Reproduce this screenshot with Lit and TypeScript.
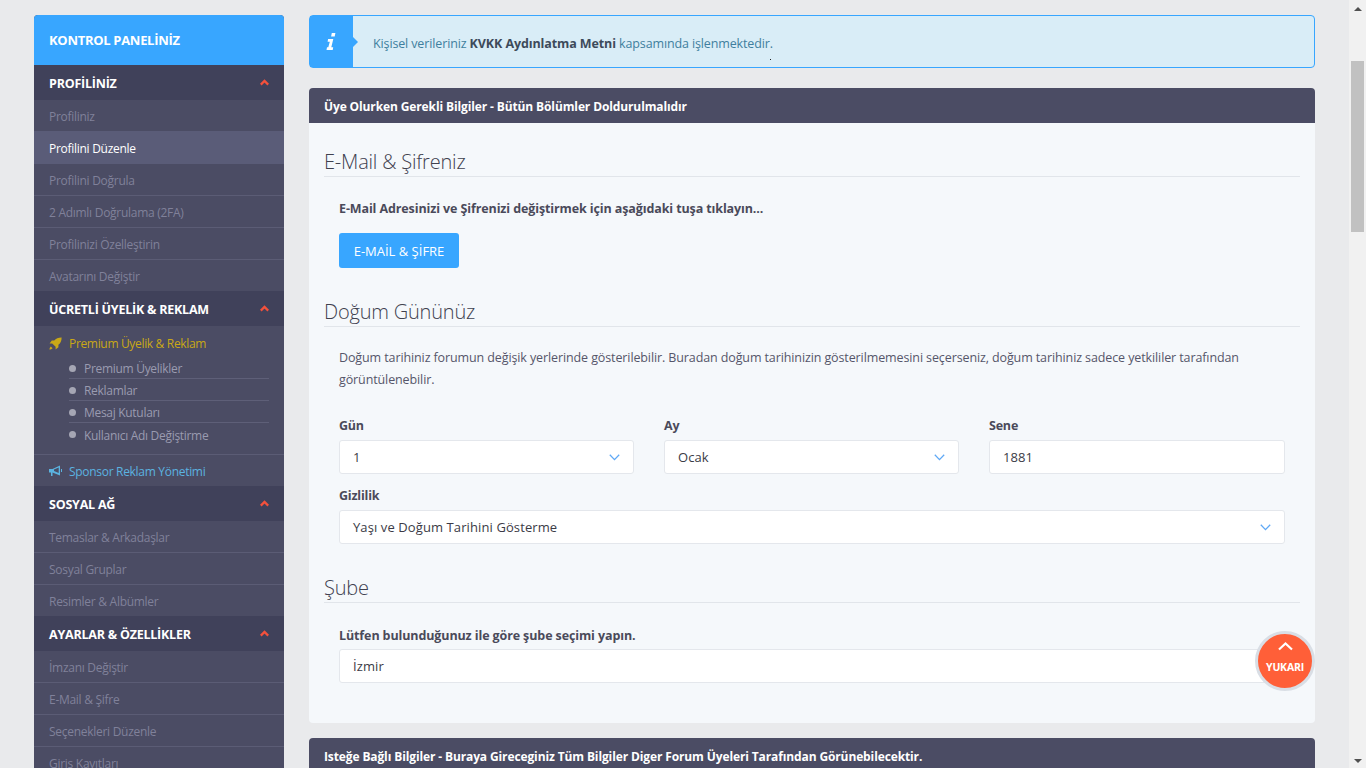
import { LitElement, html, css } from "lit";
import { customElement } from "lit/decorators.js";

const chevUp = html`<svg class="chev" viewBox="0 0 9 7" width="9" height="7"><path d="M.8 5.6 4.5 1.900l3.700 3.700" fill="none" stroke="#f4513c" stroke-width="2.200"/></svg>`;
const chevDown = html`<svg class="sel-chev" viewBox="0 0 11 7" width="11" height="7"><path d="M.8.8l4.700 4.800L10.200.8" fill="none" stroke="#5fa8f5" stroke-width="1.300"/></svg>`;

const group = (title: string, items: string[], active = "") => html`
  <div class="sec">${title}${chevUp}</div>
  ${items.map((i, n) => html`<a class="item ${i === active ? "on" : ""} ${n === items.length - 1 ? "last" : ""}">${i}</a>`)}
`;

@customElement("app-root")
export class AppRoot extends LitElement {
  static styles = css`
    :host { display: block; height: 768px; overflow: hidden; background: #e9eaec; position: relative;
      font-family: "Open Sans", "Noto Sans", sans-serif; color: #4a4a5a; }
    * { box-sizing: border-box; }
    .wrap { display: flex; height: 768px; overflow: hidden; }
    .page { flex: 1; display: flex; gap: 25px; padding: 15px 0 0 34px; height: 768px; overflow: hidden; align-items: flex-start; }
    .side { width: 250px; flex: none; background: #4b4c64; border-radius: 4px 4px 0 0; }
    .brand { height: 50px; background: #38a6ff; color: #fff; font-weight: 700; font-size: 13px; letter-spacing: -0.3px; display: flex; align-items: center; padding-left: 15px; border-radius: 4px 4px 0 0; }
    .sec { height: 35px; background: #40415a; color: #fff; font-weight: 700; font-size: 12.5px; letter-spacing: -0.22px; display: flex; align-items: center; justify-content: space-between; padding: 1px 15px 0; }
    .chev { display: block; margin-top: -1px; }
    .item { display: flex; align-items: center; height: 32px; padding: 1px 15px 0; font-size: 12px; letter-spacing: -0.28px; color: #80819a; border-bottom: 1px solid #5b5c75; }
    .item.last { border-bottom: 0; height: 31px; }
    .item:first-of-type { border-bottom: 0; height: 31px; }
    .item.on { background: #5a5c78; color: #fff; border-bottom: 0; height: 33px; }
    .prem { height: 129px; border-bottom: 1px solid #5b5c75; padding: 9px 15px 0; }
    .lead { display: flex; align-items: center; gap: 7px; height: 17px; font-size: 12px; letter-spacing: -0.33px; color: #c9a816; }
    .lead svg { flex: none; }
    .subs { margin: 5px 0 0 20px; }
    .sub { position: relative; height: 22px; display: flex; align-items: center; padding: 2px 0 0 15px; font-size: 12px; letter-spacing: -0.3px; color: #9a9bb0; border-bottom: 1px solid #5e5f78; }
    .sub:last-child { border-bottom: 0; }
    .sub::before { content: ""; position: absolute; left: 0; top: 8px; width: 7px; height: 7px; border-radius: 50%; background: #a5a6b4; }
    .spons { display: flex; align-items: center; gap: 7px; height: 31px; padding: 1px 15px 0; font-size: 12px; letter-spacing: -0.3px; color: #5bb3e0; }
    .main { width: 1006px; flex: none; }
    .alert { position: relative; height: 53px; border: 1px solid #38a6ff; border-radius: 4px; background: #d9edf7; display: flex; align-items: center; font-size: 12.5px; letter-spacing: -0.13px; color: #3f7f9e; }
    .alert b { color: #3d4a5a; font-weight: 700; letter-spacing: -0.1px; }
    .msg { padding-top: 3px; }
    .ibox { position: relative; width: 43px; height: 100%; background: #38a6ff; margin-right: 20px; display: flex; align-items: center; justify-content: center; flex: none; padding: 0 2px 1px 0; }
    .ibox::after { content: ""; position: absolute; left: 100%; top: 21px; border: 5px solid transparent; border-left-color: #38a6ff; border-right: 0; }
    .speck { position: absolute; left: 460px; top: 43px; width: 1px; height: 1px; background: #222; }
    .panel-h { margin-top: 20px; height: 35px; background: #4b4c64; color: #fff; font-weight: 700; font-size: 12px; letter-spacing: -0.12px; display: flex; align-items: center; padding: 1px 15px 0; border-radius: 4px 4px 0 0; }
    .panel-b { height: 600px; background: #f5f8fb; border-radius: 0 0 4px 4px; padding: 23px 15px 0; }
    .h { height: 31px; border-bottom: 1px solid #e1e5ea; font-size: 20px; font-weight: 300; letter-spacing: -0.2px; color: #40414f; line-height: 31px; }
    .in { padding: 0 15px; }
    .bold { font-size: 12.5px; font-weight: 700; letter-spacing: -0.11px; color: #4a4a5a; }
    .btn { display: inline-flex; align-items: center; justify-content: center; width: 120px; height: 35px; background: #38a6ff; color: #fff; border-radius: 3px; font-size: 13px; padding-top: 1px; margin-top: 16px; }
    .p { margin: 20px 0 0; font-size: 12.5px; letter-spacing: -0.11px; line-height: 22px; color: #55566a; width: 930px; }
    .row { display: grid; grid-template-columns: 295px 295px 296px; column-gap: 30px; }
    label { display: block; height: 20px; font-size: 12.5px; font-weight: 700; letter-spacing: -0.2px; color: #4a4a5a; line-height: 20px; }
    .row label { height: 24px; }
    .sel { height: 34px; background: #fff; border: 1px solid #e4e7ec; border-radius: 3px; display: flex; align-items: center; justify-content: space-between; padding: 0 13px; font-size: 13px; letter-spacing: 0.1px; color: #3b3b46; }
    .up { position: absolute; left: 1255px; top: 631px; width: 60px; height: 60px; border-radius: 50%; background: #ff5f38; border: 3px solid #d9dee5; color: #fff; display: flex; flex-direction: column; align-items: center; font-size: 10.5px; font-weight: 700; letter-spacing: -0.2px; padding-top: 8px; }
    .up span { margin-top: 10px; line-height: 13px; }
    .sb { width: 17px; flex: none; background: #f1f1f1; height: 768px; display: flex; flex-direction: column; align-items: center; justify-content: space-between; padding: 7px 0 5px; position: relative; }
    .thumb { position: absolute; left: 2px; top: 61px; width: 13px; height: 171px; background: #c1c1c1; }
    .tri-u { border: 4px solid transparent; border-top: 0; border-bottom: 4px solid #505050; }
    .tri-d { border: 4px solid transparent; border-bottom: 0; border-top: 4px solid #505050; }
  `;

  render() {
    return html`<div class="wrap">
      <div class="page">
        <nav class="side">
          <div class="brand">KONTROL PANELİNİZ</div>
          ${group("PROFİLİNİZ", ["Profiliniz", "Profilini Düzenle", "Profilini Doğrula", "2 Adımlı Doğrulama (2FA)", "Profilinizi Özelleştirin", "Avatarını Değiştir"], "Profilini Düzenle")}
          <div class="sec">ÜCRETLİ ÜYELİK &amp; REKLAM${chevUp}</div>
          <div class="prem">
            <div class="lead"><svg width="13" height="13" viewBox="0 0 13 13"><path d="M12.600.4C9.500.3 7 1.400 5.200 3.600H2.800L.6 6.400h2.600l3.400 3.400v2.600l2.800-2.200V7.800C11.600 6 12.700 3.500 12.600.4zM1.800 9.400c-.9.7-1.300 2-1.400 3.200 1.200-.1 2.500-.5 3.200-1.400z" fill="#c9a816"/></svg>Premium Üyelik &amp; Reklam</div>
            <div class="subs">
              ${["Premium Üyelikler", "Reklamlar", "Mesaj Kutuları", "Kullanıcı Adı Değiştirme"].map((s) => html`<div class="sub">${s}</div>`)}
            </div>
          </div>
          <div class="spons"><svg width="13" height="12" viewBox="0 0 13 12"><path d="M0 4h3.500L11 .5v10L3.500 7.400V11H2V7.400H0zM9.700 2.400 5 4.500v1.600l4.700 2zM12 4v3h1V4z" fill="#5bb3e0"/></svg>Sponsor Reklam Yönetimi</div>
          ${group("SOSYAL AĞ", ["Temaslar & Arkadaşlar", "Sosyal Gruplar", "Resimler & Albümler"])}
          ${group("AYARLAR & ÖZELLİKLER", ["İmzanı Değiştir", "E-Mail & Şifre", "Seçenekleri Düzenle", "Giriş Kayıtları"])}
        </nav>
        <main class="main">
          <div class="alert">
            <div class="ibox"><svg width="10" height="17" viewBox="0 0 10 17"><path d="M5.800 0h3.600l-.7 3.600H5.100zM2.100 6h5.200L5.300 14.300h1.900l-.5 2.700H.5l.5-2.700h1.300L3.800 8.700H1.600z" fill="#fff"/></svg></div>
            <div class="msg">Kişisel verileriniz <b>KVKK Aydınlatma Metni</b> kapsamında işlenmektedir.</div>
            <div class="speck"></div>
          </div>
          <div class="panel-h">Üye Olurken Gerekli Bilgiler - Bütün Bölümler Doldurulmalıdır</div>
          <div class="panel-b">
            <div class="h">E-Mail &amp; Şifreniz</div>
            <div class="in">
              <div class="bold" style="margin-top:23px">E-Mail Adresinizi ve Şifrenizi değiştirmek için aşağıdaki tuşa tıklayın...</div>
              <div class="btn">E-MAİL &amp; ŞİFRE</div>
            </div>
            <div class="h" style="margin-top:28px">Doğum Gününüz</div>
            <div class="in">
              <p class="p">Doğum tarihiniz forumun değişik yerlerinde gösterilebilir. Buradan doğum tarihinizin gösterilmemesini seçerseniz, doğum tarihiniz sadece yetkililer tarafından görüntülenebilir.</p>
              <div class="row" style="margin-top:25px">
                <div><label>Gün</label><div class="sel">1${chevDown}</div></div>
                <div><label>Ay</label><div class="sel">Ocak${chevDown}</div></div>
                <div><label>Sene</label><div class="sel">1881</div></div>
              </div>
              <label style="margin-top:12px;margin-bottom:4px">Gizlilik</label>
              <div class="sel" style="width:946px">Yaşı ve Doğum Tarihini Gösterme${chevDown}</div>
            </div>
            <div class="h" style="margin-top:28px">Şube</div>
            <div class="in">
              <div class="bold" style="margin-top:24px;margin-bottom:5px">Lütfen bulunduğunuz ile göre şube seçimi yapın.</div>
              <div class="sel" style="width:946px">İzmir</div>
            </div>
          </div>
          <div class="panel-h" style="margin-top:15px">Isteğe Bağlı Bilgiler - Buraya Gireceginiz Tüm Bilgiler Diger Forum Üyeleri Tarafından Görünebilecektir.</div>
        </main>
      </div>
      <div class="sb"><div class="tri-u"></div><div class="thumb"></div><div class="tri-d"></div></div>
    </div>
    <div class="up"><svg width="15" height="9" viewBox="0 0 15 9"><path d="M1 7.500 7.500 1.500l6.500 6" fill="none" stroke="#fff" stroke-width="2.200"/></svg><span>YUKARI</span></div>`;
  }
}
